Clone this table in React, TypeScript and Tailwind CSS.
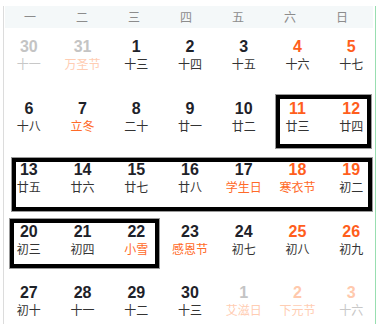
type Day = { n: number; l: string; fade?: boolean; fest?: boolean };

const rows: Day[][] = [
  [
    { n: 30, l: "十一", fade: true },
    { n: 31, l: "万圣节", fade: true, fest: true },
    { n: 1, l: "十三" },
    { n: 2, l: "十四" },
    { n: 3, l: "十五" },
    { n: 4, l: "十六" },
    { n: 5, l: "十七" },
  ],
  [
    { n: 6, l: "十八" },
    { n: 7, l: "立冬", fest: true },
    { n: 8, l: "二十" },
    { n: 9, l: "廿一" },
    { n: 10, l: "廿二" },
    { n: 11, l: "廿三" },
    { n: 12, l: "廿四" },
  ],
  [
    { n: 13, l: "廿五" },
    { n: 14, l: "廿六" },
    { n: 15, l: "廿七" },
    { n: 16, l: "廿八" },
    { n: 17, l: "学生日", fest: true },
    { n: 18, l: "寒衣节", fest: true },
    { n: 19, l: "初二" },
  ],
  [
    { n: 20, l: "初三" },
    { n: 21, l: "初四" },
    { n: 22, l: "小雪", fest: true },
    { n: 23, l: "感恩节", fest: true },
    { n: 24, l: "初七" },
    { n: 25, l: "初八" },
    { n: 26, l: "初九" },
  ],
  [
    { n: 27, l: "初十" },
    { n: 28, l: "十一" },
    { n: 29, l: "十二" },
    { n: 30, l: "十三" },
    { n: 1, l: "艾滋日", fade: true, fest: true },
    { n: 2, l: "下元节", fade: true, fest: true },
    { n: 3, l: "十六", fade: true },
  ],
];

const weekdays = ["一", "二", "三", "四", "五", "六", "日"];

function numColor(d: Day, col: number) {
  const weekend = col >= 5;
  if (d.fade) return weekend ? "text-[#ffc9ad]" : "text-[#c4c4c4]";
  return weekend ? "text-[#ff5e1c]" : "text-[#1e2229]";
}

function lunarColor(d: Day) {
  if (d.fest) return d.fade ? "text-[#ffcdb3]" : "text-[#ff6a28]";
  return d.fade ? "text-[#c8c8c8]" : "text-[#333]";
}

export default function App() {
  return (
    <div className="relative w-[379px] h-[324px] bg-white font-['Liberation_Sans','Noto_Sans_CJK_SC',sans-serif]">
      <div className="ml-[3px] w-[373px] h-[319px] border-l border-b border-r border-l-[#dcdcdc] border-b-[#dcdcdc] border-r-[#98deb0]">
        {/* weekday header */}
        <div className="mt-[6px] ml-[1px] w-[368px] h-[22px] bg-[#f4f8f9]">
          <div className="-ml-px w-[364px] grid grid-cols-7">
            {weekdays.map((w) => (
              <div
                key={w}
                className="text-center text-[12px] leading-[22px] text-[#8c8c8c] font-['Noto_Sans_CJK_SC',sans-serif]"
              >
                {w}
              </div>
            ))}
          </div>
        </div>

        {/* days */}
        <div className="-ml-[2px] w-[376px] grid grid-cols-7">
          {rows.map((row, r) =>
            row.map((d, c) => (
              <div key={`${r}-${c}`} className="h-[61.5px] flex flex-col items-center pt-[10px]">
                <span className={`text-[16px] font-bold leading-[18px] ${numColor(d, c)}`}>{d.n}</span>
                <span
                  className={`text-[12px] leading-[16px] font-['Noto_Sans_CJK_SC',sans-serif] ${lunarColor(d)}`}
                >
                  {d.l}
                </span>
              </div>
            ))
          )}
        </div>
      </div>

      {/* selection boxes */}
      <div className="absolute left-[276px] top-[89px] w-[95px] h-[53px] border-4 border-black shadow-[0_0_0_1px_#9a9a9a]" />
      <div className="absolute left-[12px] top-[152px] w-[360px] h-[53px] border-4 border-black shadow-[0_0_0_1px_#9a9a9a]" />
      <div className="absolute left-[10px] top-[213px] w-[149px] h-[49px] border-4 border-black shadow-[0_0_0_1px_#9a9a9a]" />
    </div>
  );
}
